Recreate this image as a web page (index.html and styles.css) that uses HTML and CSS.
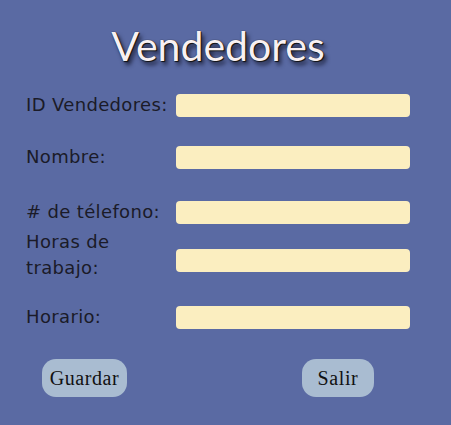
FILE: index.html
```html
<!DOCTYPE html>
<html lang="es">
<head>
<meta charset="utf-8">
<link rel="stylesheet" href="styles.css">
</head>
<body>
<div class="page">
  <h1 class="title">Vendedores</h1>
  <form class="form">
    <div class="row r1"><label class="lbl">ID Vendedores:</label><input class="field" type="text"></div>
    <div class="row r2"><label class="lbl">Nombre:</label><input class="field" type="text"></div>
    <div class="row r3"><label class="lbl"># de télefono:</label><input class="field" type="text"></div>
    <div class="row r4"><label class="lbl">Horas de trabajo:</label><input class="field f4" type="text"></div>
    <div class="row r5"><label class="lbl">Horario:</label><input class="field" type="text"></div>
    <div class="actions">
      <button type="button" class="btn b-save">Guardar</button>
      <button type="button" class="btn b-exit">Salir</button>
    </div>
  </form>
</div>
</body>
</html>
```
FILE: styles.css
```css
html, body {
  margin: 0;
  padding: 0;
}
body {
  background: #5a6aa3;
  width: 451px;
  height: 425px;
  overflow: hidden;
}
.page {
  padding-left: 26px;
  width: 384px;
}
.title {
  margin: 0;
  padding-top: 24px;
  height: 44px;
  font-family: Lato, sans-serif;
  font-weight: 400;
  font-size: 41px;
  line-height: 44px;
  text-align: center;
  color: #f8f0f2;
  text-shadow: 0 0 1px #111, 1px 1px 1px #111, 3px 4px 4px #1f2440;
}
.form {
  display: flex;
  flex-direction: column;
  margin-top: 24px;
}
.row {
  display: flex;
  align-items: center;
}
.lbl {
  width: 150px;
  font-family: "DejaVu Sans", sans-serif;
  font-size: 18px;
  letter-spacing: 0.35px;
  line-height: 26px;
  color: #1b1b28;
}
.field {
  width: 234px;
  height: 23px;
  box-sizing: border-box;
  border: none;
  border-radius: 4px;
  background: #fbeec0;
  margin: 0;
  padding: 0;
}
.r2 { margin-top: 26px; }
.r3 { margin-top: 29px; }
.r4 { margin-top: 4px; }
.r4 .lbl { width: 130px; margin-right: 20px; }
.f4 { margin-top: 11px; }
.r5 { margin-top: 23px; }
.actions {
  display: flex;
  margin-top: 29px;
  padding-left: 16px;
}
.btn {
  height: 38px;
  border: none;
  border-radius: 14px;
  background: #a9bcd1;
  font-family: "Liberation Serif", serif;
  font-size: 20px;
  letter-spacing: 0.6px;
  color: #111;
  padding: 0;
}
.b-save { width: 85px; }
.b-exit { width: 72px; margin-left: 175px; }
```
